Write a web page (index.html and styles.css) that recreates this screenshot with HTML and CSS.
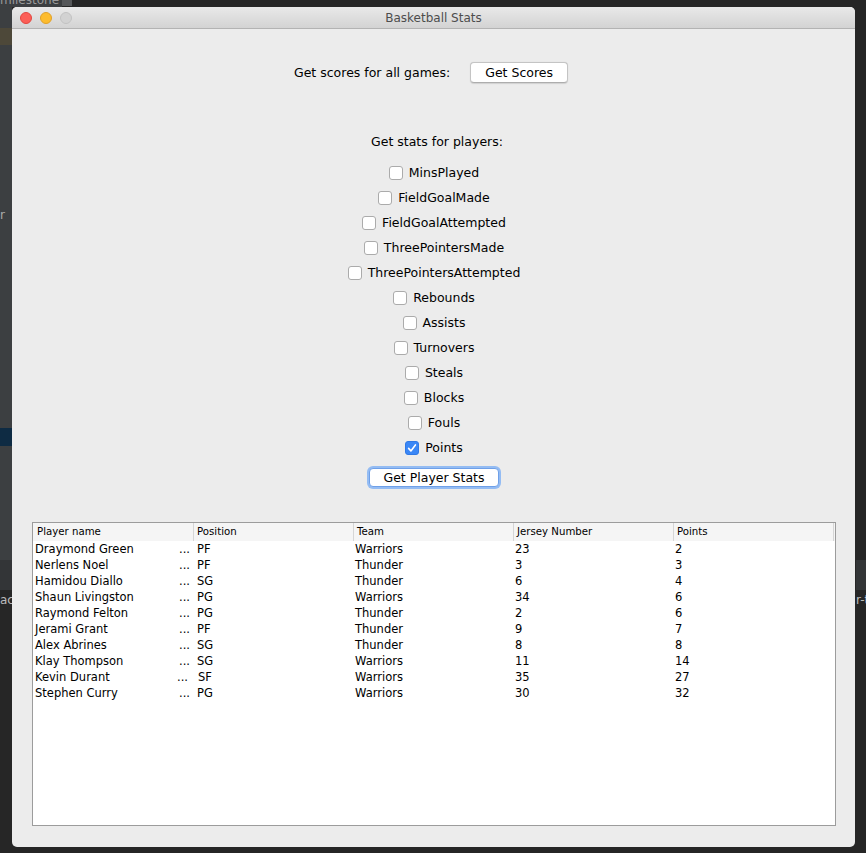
FILE: index.html
```html
<!DOCTYPE html>
<html>
<head>
<meta charset="utf-8">
<title>Basketball Stats</title>
<link rel="stylesheet" href="styles.css">
</head>
<body>
<div class="desk desk-top">milestone</div>
<div class="desk desk-topbox"></div>
<div class="desk desk-left"></div>
<div class="desk desk-left-bar"></div>
<div class="desk desk-left-sel"></div>
<div class="desk desk-left-r">r</div>
<div class="desk desk-left-low"></div>
<div class="desk desk-left-ac">ac</div>
<div class="desk desk-right-low"></div>
<div class="desk desk-right-rt">r-t</div>

<div class="window">
  <div class="titlebar">
    <div class="lights">
      <span class="light red"></span>
      <span class="light yellow"></span>
      <span class="light gray"></span>
    </div>
    <div class="title">Basketball Stats</div>
    <div></div>
  </div>
  <div class="content">
    <div class="scores-row">
      <span>Get scores for all games:</span>
      <button class="btn">Get Scores</button>
    </div>
    <div class="stats-label">Get stats for players:</div>
    <div class="checks">
      <label class="check"><span class="box"></span><span>MinsPlayed</span></label>
      <label class="check"><span class="box"></span><span>FieldGoalMade</span></label>
      <label class="check"><span class="box"></span><span>FieldGoalAttempted</span></label>
      <label class="check"><span class="box"></span><span>ThreePointersMade</span></label>
      <label class="check"><span class="box"></span><span>ThreePointersAttempted</span></label>
      <label class="check"><span class="box"></span><span>Rebounds</span></label>
      <label class="check"><span class="box"></span><span>Assists</span></label>
      <label class="check"><span class="box"></span><span>Turnovers</span></label>
      <label class="check"><span class="box"></span><span>Steals</span></label>
      <label class="check"><span class="box"></span><span>Blocks</span></label>
      <label class="check"><span class="box"></span><span>Fouls</span></label>
      <label class="check"><span class="box checked"><svg width="14" height="14" viewBox="0 0 14 14"><path d="M3.6 7.4 L5.9 9.9 L10.4 3.9" fill="none" stroke="#fff" stroke-width="1.6" stroke-linecap="round" stroke-linejoin="round"/></svg></span><span>Points</span></label>
    </div>
    <button class="btn btn-focus">Get Player Stats</button>
    <div class="table">
      <div class="thead">
        <div class="th">Player name</div>
        <div class="th">Position</div>
        <div class="th">Team</div>
        <div class="th">Jersey Number</div>
        <div class="th">Points</div>
        <div class="th th-rest"></div>
      </div>
      <div class="tr"><div class="td name"><span>Draymond Green</span><span>...</span></div><div class="td pos">PF</div><div class="td">Warriors</div><div class="td">23</div><div class="td">2</div></div>
      <div class="tr"><div class="td name"><span>Nerlens Noel</span><span>...</span></div><div class="td pos">PF</div><div class="td">Thunder</div><div class="td">3</div><div class="td">3</div></div>
      <div class="tr"><div class="td name"><span>Hamidou Diallo</span><span>...</span></div><div class="td pos">SG</div><div class="td">Thunder</div><div class="td">6</div><div class="td">4</div></div>
      <div class="tr"><div class="td name"><span>Shaun Livingston</span><span>...</span></div><div class="td pos">PG</div><div class="td">Warriors</div><div class="td">34</div><div class="td">6</div></div>
      <div class="tr"><div class="td name"><span>Raymond Felton</span><span>...</span></div><div class="td pos">PG</div><div class="td">Thunder</div><div class="td">2</div><div class="td">6</div></div>
      <div class="tr"><div class="td name"><span>Jerami Grant</span><span>...</span></div><div class="td pos">PF</div><div class="td">Thunder</div><div class="td">9</div><div class="td">7</div></div>
      <div class="tr"><div class="td name"><span>Alex Abrines</span><span>...</span></div><div class="td pos">SG</div><div class="td">Thunder</div><div class="td">8</div><div class="td">8</div></div>
      <div class="tr"><div class="td name"><span>Klay Thompson</span><span>...</span></div><div class="td pos">SG</div><div class="td">Warriors</div><div class="td">11</div><div class="td">14</div></div>
      <div class="tr"><div class="td name"><span>Kevin Durant</span><span class="ell-wide">...</span></div><div class="td pos pos-wide">SF</div><div class="td">Warriors</div><div class="td">35</div><div class="td">27</div></div>
      <div class="tr"><div class="td name"><span>Stephen Curry</span><span>...</span></div><div class="td pos">PG</div><div class="td">Warriors</div><div class="td">30</div><div class="td">32</div></div>
    </div>
  </div>
</div>
</body>
</html>
```

FILE: styles.css
```css
html, body {
  margin: 0;
  padding: 0;
}
body {
  width: 866px;
  height: 853px;
  overflow: hidden;
  position: relative;
  background: #262626;
  font-family: "DejaVu Sans", sans-serif;
  padding: 7px 0 0 12px;
  box-sizing: border-box;
}

/* desktop behind the window */
.desk {
  position: absolute;
}
.desk-top {
  left: 0;
  top: -7px;
  width: 62px;
  height: 14px;
  background: #3c3f41;
  color: #9a9a9a;
  font-size: 12px;
  line-height: 14px;
  overflow: hidden;
}
.desk-topbox {
  left: 62px;
  top: 0;
  width: 10px;
  height: 6px;
  background: #555759;
}
.desk-left {
  left: 0;
  top: 7px;
  width: 12px;
  height: 553px;
  background: #3c3f41;
}
.desk-left-bar {
  left: 0;
  top: 28px;
  width: 12px;
  height: 17px;
  background: #4d4839;
}
.desk-left-sel {
  left: 0;
  top: 428px;
  width: 12px;
  height: 18px;
  background: #0e2b43;
}
.desk-left-r {
  left: 0;
  top: 208px;
  color: #aaa;
  font-size: 12px;
}
.desk-left-low {
  left: 0;
  top: 560px;
  width: 12px;
  height: 30px;
  background: #333537;
}
.desk-left-ac {
  left: 0;
  top: 593px;
  color: #bbb;
  font-size: 12px;
  width: 12px;
  overflow: hidden;
  white-space: nowrap;
}
.desk-right-low {
  left: 856px;
  top: 560px;
  width: 10px;
  height: 30px;
  background: #333537;
}
.desk-right-rt {
  left: 856px;
  top: 593px;
  color: #bbb;
  font-size: 12px;
  width: 10px;
  overflow: hidden;
  white-space: nowrap;
}

/* window */
.window {
  position: relative;
  z-index: 1;
  width: 843px;
  height: 840px;
  background: #ececec;
  border-radius: 5px;
  overflow: hidden;
}
.titlebar {
  height: 21px;
  border-bottom: 1px solid #b3b3b3;
  background: linear-gradient(#e9e9e9, #d3d3d3);
  display: grid;
  grid-template-columns: 1fr auto 1fr;
  align-items: center;
}
.lights {
  display: flex;
  gap: 8px;
  padding-left: 8px;
}
.light {
  width: 12px;
  height: 12px;
  border-radius: 50%;
  box-sizing: border-box;
}
.red {
  background: #fc5f57;
  border: 1px solid #e2463f;
}
.yellow {
  background: #fdbc2e;
  border: 1px solid #e0a028;
}
.gray {
  background: #d2d2d2;
  border: 1px solid #c2c2c2;
}
.title {
  font-size: 12px;
  color: #4d4d4d;
  line-height: 21px;
  padding-top: 1px;
}

.content {
  padding: 33px 19px 0 20px;
  display: flex;
  flex-direction: column;
  align-items: center;
  font-size: 12.5px;
  color: #000;
}
.scores-row {
  display: flex;
  align-items: center;
  gap: 20px;
  height: 21px;
  padding-right: 6px;
}
.btn {
  font-family: "DejaVu Sans", sans-serif;
  font-size: 12.5px;
  color: #000;
  background: #fff;
  border: 1px solid #c4c4c4;
  border-bottom-color: #adadad;
  border-radius: 4px;
  height: 21px;
  padding: 0 14px;
  margin: 0;
  line-height: 19px;
  box-shadow: 0 0.5px 1px rgba(0, 0, 0, 0.12);
}
.stats-label {
  margin-top: 51px;
  height: 16px;
  line-height: 16px;
  padding-left: 6px;
}
.checks {
  margin-top: 10px;
  display: flex;
  flex-direction: column;
  align-items: center;
}
.check {
  height: 25px;
  display: flex;
  align-items: center;
  gap: 6px;
}
.box {
  width: 14px;
  height: 14px;
  box-sizing: border-box;
  border: 1px solid #ababab;
  border-radius: 3px;
  background: #fff;
  display: block;
}
.box.checked {
  background: #3a87f6;
  border-color: #2f79e6;
}
.box.checked svg {
  display: block;
  margin: -1px 0 0 -1px;
}
.btn-focus {
  margin-top: 8px;
  height: 19px;
  line-height: 17px;
  padding: 0 13px;
  border-color: #6fa0e8;
  box-shadow: 0 0 0 2px #94bcf3;
}
.table {
  margin-top: 35px;
  align-self: stretch;
  height: 304px;
  box-sizing: border-box;
  border: 1px solid #9c9c9c;
  background: #fff;
}
.thead {
  display: grid;
  grid-template-columns: repeat(5, 160px) 1fr;
  height: 18px;
  background: #f5f5f5;
}
.th {
  font-size: 10.2px;
  line-height: 18px;
  padding-left: 3px;
  border-left: 1px solid #d6d6d6;
  white-space: nowrap;
}
.th:first-child {
  border-left: none;
  padding-left: 4px;
}
.tr {
  display: grid;
  grid-template-columns: repeat(5, 160px) 1fr;
  height: 16px;
}
.td {
  font-size: 11.5px;
  line-height: 16px;
  padding-left: 2px;
  white-space: nowrap;
}
.name {
  display: flex;
  justify-content: space-between;
  padding-right: 3px;
}
.ell-wide {
  padding-right: 2px;
}
.pos {
  padding-left: 4px;
}
.pos-wide {
  padding-left: 5px;
}
```
